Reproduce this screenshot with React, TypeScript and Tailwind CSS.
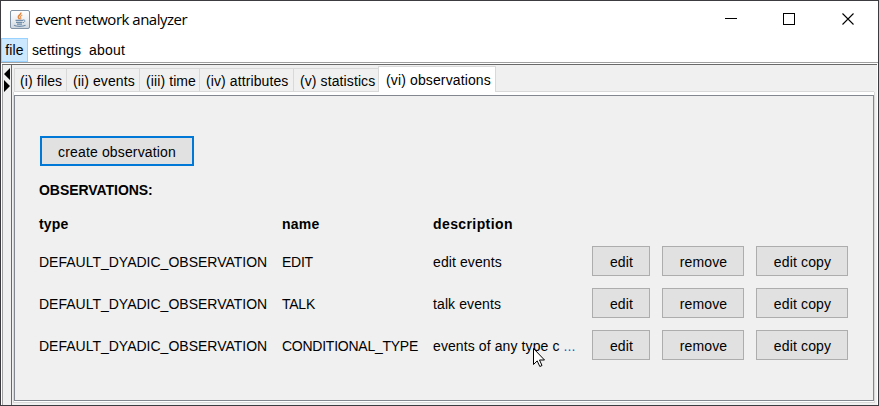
import React from "react";

const tabs = [
  { label: "(i) files", className: "w-[52px] pl-[5px]" },
  { label: "(ii) events", className: "w-[73px] pl-[6px]" },
  { label: "(iii) time", className: "w-[60px] pl-[6px]" },
  { label: "(iv) attributes", className: "w-[94px] pl-[6px]" },
  { label: "(v) statistics", className: "w-[85px] pl-[6px]" },
];

const rows = [
  { type: "DEFAULT_DYADIC_OBSERVATION", name: "EDIT", description: "edit events", more: false },
  { type: "DEFAULT_DYADIC_OBSERVATION", name: "TALK", description: "talk events", more: false },
  { type: "DEFAULT_DYADIC_OBSERVATION", name: "CONDITIONAL_TYPE", description: "events of any type c", more: true },
];

function JavaIcon() {
  return (
    <svg width="20" height="20" viewBox="0 0 20 20" fill="none">
      <defs>
        <linearGradient id="tile" x1="0" y1="0" x2="0" y2="1">
          <stop offset="0" stopColor="#ffffff" />
          <stop offset="0.5" stopColor="#edf0f3" />
          <stop offset="1" stopColor="#cdd5dd" />
        </linearGradient>
      </defs>
      <rect x="0.5" y="0.5" width="19" height="18" rx="1.5" fill="url(#tile)" stroke="#8193a5" />
      <path d="M10.8 2.5c.8 2-2.8 2.6-2.5 4.6.1.9 1 1.5 1.3 2.2" stroke="#e2853c" strokeWidth="1.5" />
      <path d="M12.3 5c-1.7.8-2.3 1.6-1.6 2.6.4.7.2 1.2-.4 1.8" stroke="#e99a5c" strokeWidth="1.2" />
      <path d="M5.5 10.3h7.5M6 12.3h6.5M7 14.2h5" stroke="#6f8dab" strokeWidth="1.2" />
      <path d="M13 10c2.5-.5 2.5 1.8 0 2.8" stroke="#6f8dab" />
      <path d="M4 15.3c2 1.4 9 1.4 11.5 0" stroke="#6f8dab" strokeWidth="1.2" />
    </svg>
  );
}

function TitleBar() {
  return (
    <header className="flex h-[37px] shrink-0 items-center bg-white pl-[9px]">
      <JavaIcon />
      <h1 className="ml-[5px] flex-1 whitespace-nowrap pb-px font-['Open_Sans',sans-serif] text-[15px] tracking-[-0.5px]">
        event network analyzer
      </h1>
      <svg width="170" height="37" viewBox="708 1 170 37" fill="none" stroke="#000" shapeRendering="crispEdges">
        <path d="M725 18.5h12" />
        <rect x="783.5" y="13.5" width="11" height="11" />
        <path d="M842.5 13.5l11 11M853.5 13.5l-11 11" shapeRendering="auto" strokeWidth="1.1" />
      </svg>
    </header>
  );
}

function Button({ children, className }: { children: React.ReactNode; className: string }) {
  return (
    <button className={`flex h-[30px] items-center justify-center whitespace-nowrap bg-[#e1e1e1] pt-[2px] tracking-[0.15px] ${className}`}>
      {children}
    </button>
  );
}

export default function App() {
  return (
    <div className="relative flex h-[406px] w-[879px] flex-col overflow-hidden border border-[#3c3c40] bg-white font-['Liberation_Sans',Arial,sans-serif] text-[14px] leading-4 text-black">
      <TitleBar />
      <nav className="flex h-6 shrink-0 bg-white">
        <span className="flex w-[27px] items-center justify-center border border-[#99d1ff] bg-[#cce8ff] tracking-[0.1px]">file</span>
        <span className="ml-1 flex items-center tracking-[0.1px]">settings</span>
        <span className="ml-2 flex items-center tracking-[0.2px]">about</span>
      </nav>
      <div className="h-px shrink-0 bg-[#a0a0a0]" />
      <div className="h-px shrink-0 bg-white" />
      <main className="ml-px mr-px flex min-h-0 flex-1 border-t border-[#696969] bg-[#f0f0f0]">
        <aside className="w-[10px] shrink-0 border-x border-l-[#a0a0a0] border-r-[#696969] pt-[3px]">
          <svg width="8" height="24" viewBox="0 0 8 24">
            <path d="M7 0v12L1 6zM1 12v12l6-6z" />
          </svg>
        </aside>
        <section className="flex min-w-0 flex-1 flex-col pl-px pt-px">
          <div className="ml-px mr-[3px] flex h-[26px] shrink-0 items-end">
            {tabs.map((tab) => (
              <div
                key={tab.label}
                className={`flex h-6 items-center whitespace-nowrap border-b border-l border-t border-[#d9d9d9] pt-[2px] tracking-[0.1px] ${tab.className}`}
              >
                {tab.label}
              </div>
            ))}
            <div className="flex h-[26px] w-[118px] items-center whitespace-nowrap border-x border-t border-[#d9d9d9] bg-white pl-[7px] tracking-[0.13px]">
              (vi) observations
            </div>
            <div className="h-px flex-1 bg-[#d9d9d9]" />
          </div>
          <div className="mb-[2px] mr-[2px] flex min-h-0 flex-1 flex-col border-x border-b border-[#d9d9d9] bg-white pb-px pt-[3px]">
            <div className="flex flex-1 flex-col border border-[#828790] bg-[#f0f0f0] pl-6 pt-10">
              <Button className="ml-px w-[154px] border-2 border-[#0078d7]">create observation</Button>
              <h2 className="mt-4 font-bold leading-4 tracking-[-0.05px]">OBSERVATIONS:</h2>
              <div className="mt-[18px] flex font-bold">
                <span className="w-[243px] tracking-[0.2px]">type</span>
                <span className="w-[151px] tracking-[0.2px]">name</span>
                <span className="tracking-[0.4px]">description</span>
              </div>
              <div className="mt-[14px] flex flex-col gap-3">
                {rows.map((row) => (
                  <div key={row.name} className="flex h-[30px] items-center whitespace-nowrap">
                    <span className="w-[243px] pt-[2px]">{row.type}</span>
                    <span className="w-[151px] pt-[2px] tracking-[-0.25px]">{row.name}</span>
                    <span className="w-[159px] pt-[2px] tracking-[0.1px]">
                      {row.description}
                      {row.more && <span className="ml-1 text-[#0066cc]">...</span>}
                    </span>
                    <Button className="w-[58px] border border-[#adadad] pl-px">edit</Button>
                    <Button className="ml-3 w-[82px] border border-[#adadad] pl-px">remove</Button>
                    <Button className="ml-3 w-[92px] border border-[#adadad] pl-px">edit copy</Button>
                  </div>
                ))}
              </div>
            </div>
          </div>
        </section>
      </main>
      <svg className="absolute left-[532px] top-[347px]" width="13" height="20" viewBox="0 0 13 20">
        <path d="M.5.5v16l3.7-3.6 2.6 5.6 2.2-1-2.5-5.5h5z" fill="#fff" stroke="#000" />
      </svg>
    </div>
  );
}
